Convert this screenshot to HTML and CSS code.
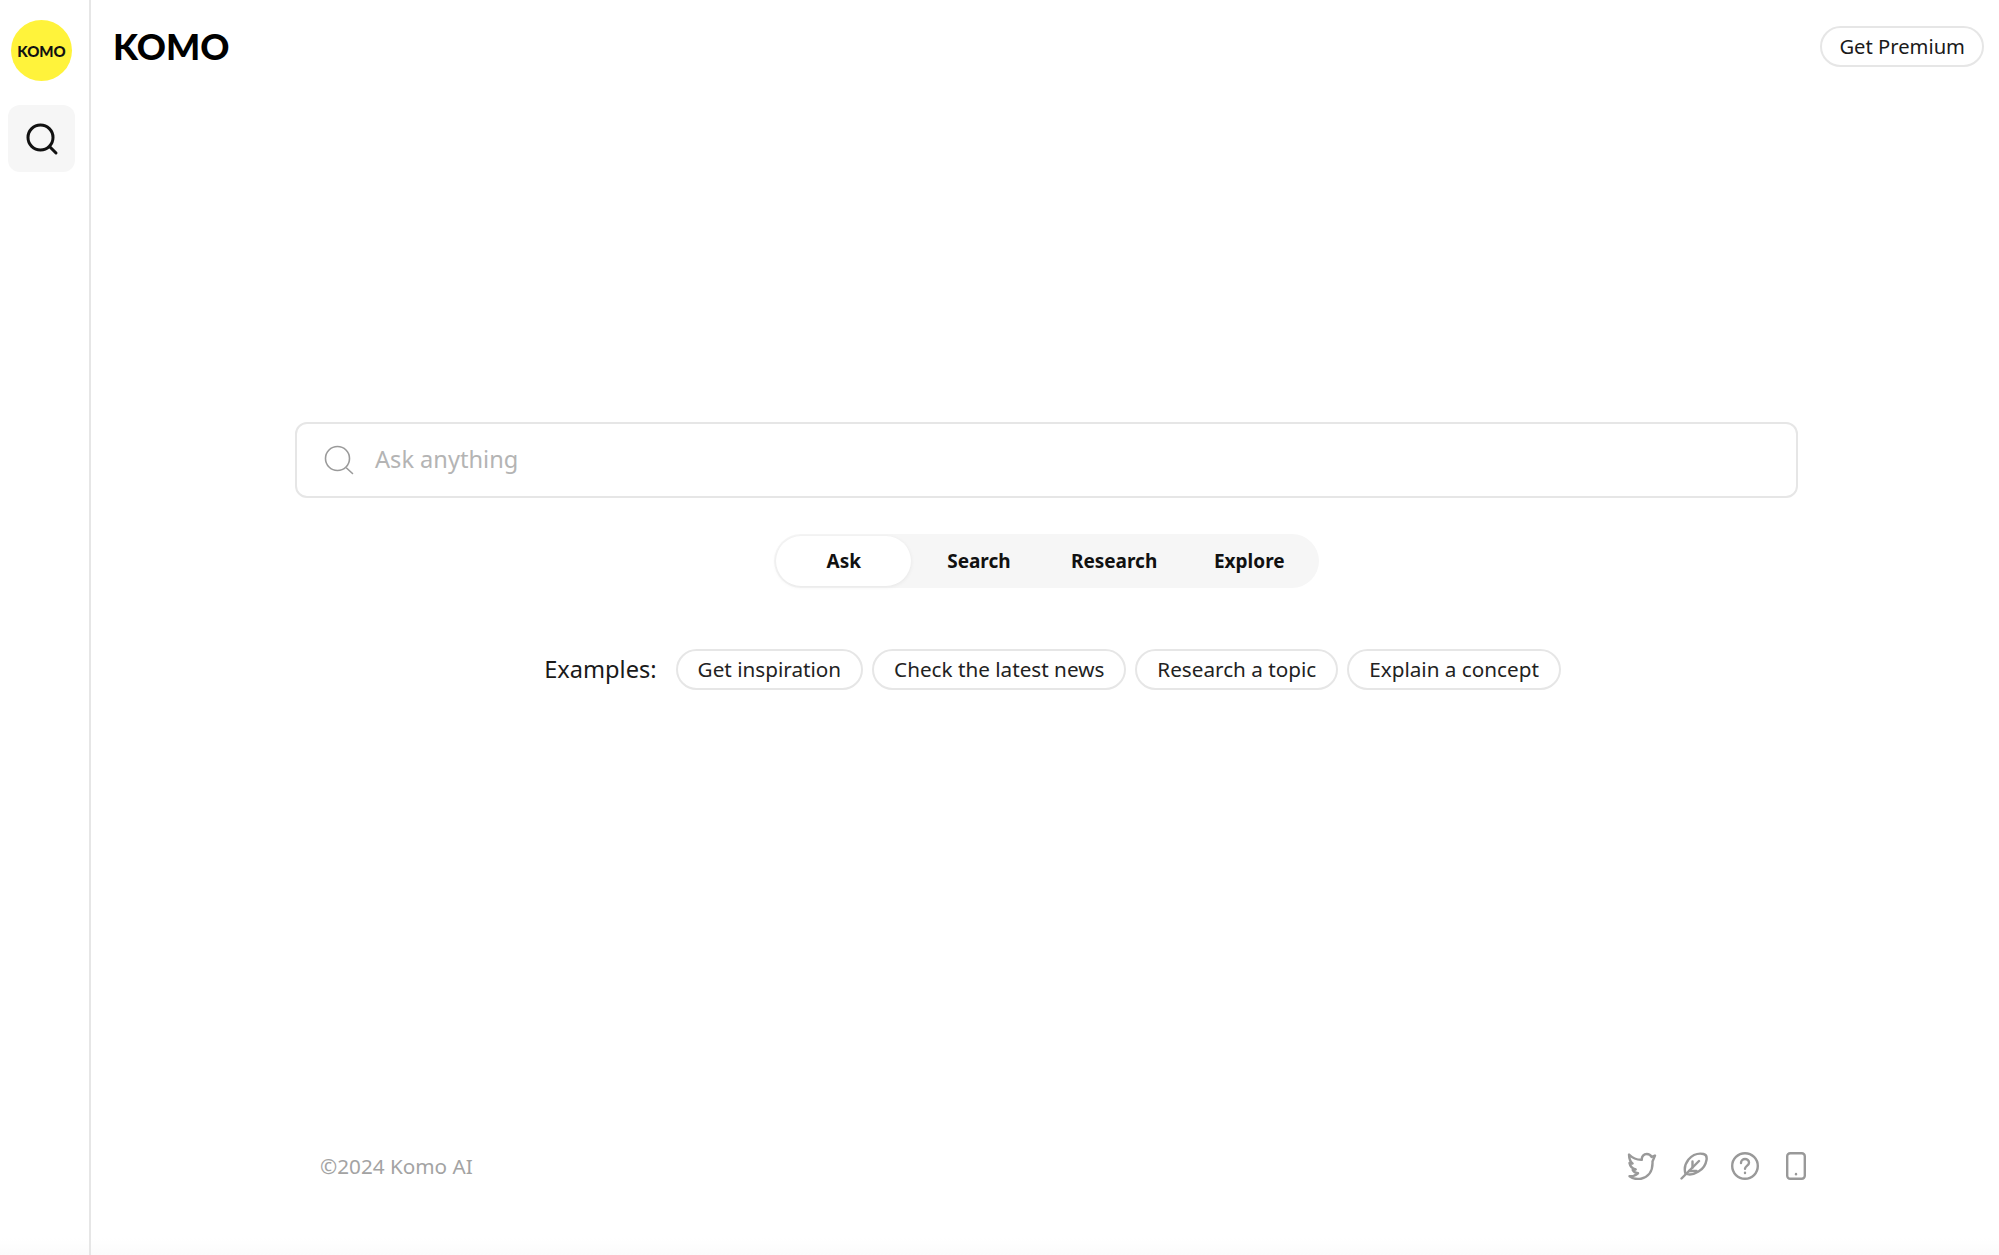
FILE: index.html
```html
<!DOCTYPE html>
<html lang="en">
<head>
    <meta charset="UTF-8">
    <meta name="viewport" content="width=device-width, initial-scale=1.0">
    <title>Komo</title>
    <link rel="stylesheet" href="styles.css">
</head>
<body>
    <div class="app">
        <aside class="sidebar">
            <div class="logo">KOMO</div>
            <button class="side-btn" aria-label="Search">
                <svg width="34" height="34" viewBox="0 0 34 34" fill="none" stroke="#111" stroke-width="3" stroke-linecap="round">
                    <circle cx="15.5" cy="15.5" r="12.5"/>
                    <path d="M25 25l6 6"/>
                </svg>
            </button>
        </aside>

        <div class="main">
            <header class="topbar">
                <div class="brand">KOMO</div>
                <button class="premium">Get Premium</button>
            </header>

            <main class="content">
                <section class="search-box">
                    <svg class="search-icon" width="30" height="30" viewBox="0 0 30 30" fill="none" stroke="#9a9a9a" stroke-width="1.6" stroke-linecap="round">
                        <circle cx="13.5" cy="13.5" r="12"/>
                        <path d="M22.5 23l6 5.5"/>
                    </svg>
                    <span class="placeholder">Ask anything</span>
                </section>

                <nav class="tabs">
                    <span class="tab active">Ask</span>
                    <span class="tab">Search</span>
                    <span class="tab">Research</span>
                    <span class="tab">Explore</span>
                </nav>

                <section class="examples">
                    <span class="examples-label">Examples:</span>
                    <span class="chip">Get inspiration</span>
                    <span class="chip">Check the latest news</span>
                    <span class="chip">Research a topic</span>
                    <span class="chip">Explain a concept</span>
                </section>
            </main>

            <footer class="footer">
                <span class="copyright">©2024 Komo AI</span>
                <div class="footer-icons">
                    <svg width="30" height="28" viewBox="0 0 30 28" fill="none" stroke="#999" stroke-width="2.4" stroke-linejoin="round" stroke-linecap="round">
                        <path d="M28 3.500l-3.400 1.400C23.600 3 21.700 2 19.800 2c-3 0-5.300 2.500-5 5.800C10 8 5.500 6 2 2.500c0 0 .2 6.500 3.500 9L2.500 11c.6 3.400 2.900 5.600 6.200 6.500l-3 .5c1 2 2.800 3 5.300 3.300-2.300 2-5.100 3-8.500 3 3.500 2.500 7.500 3.200 11.500 2.400C21 25.300 26 19.500 25.500 9.500z"/>
                    </svg>
                    <svg width="28" height="28" viewBox="0 0 28 28" fill="none" stroke="#999" stroke-width="2.4" stroke-linejoin="round" stroke-linecap="round">
                        <path d="M1.500 26.500L19 9"/>
                        <path d="M5.500 21.500C4 17 5 12 8.500 7.500c4-4.500 10-6.500 15-5.500 2.500.5 3.500 3 3 6-.8 5-3.500 9-8 11.500-4 2.500-9 4-13 2z"/>
                        <path d="M9 19h7.500M12.500 15.500V9.500"/>
                    </svg>
                    <svg width="28" height="28" viewBox="0 0 28 28" fill="none" stroke="#999" stroke-width="2.4" stroke-linecap="round">
                        <circle cx="14" cy="14" r="12.800"/>
                        <path d="M10 11c0-2.500 2-4 4-4s4 1.500 4 3.700c0 3-4 3.300-4 6"/>
                        <path d="M14 20.800v.2"/>
                    </svg>
                    <svg class="phone-icon" width="20" height="28" viewBox="0 0 20 28" fill="none" stroke="#999" stroke-width="2.4" stroke-linecap="round">
                        <rect x="1.200" y="1.200" width="17.600" height="25.600" rx="3"/>
                        <path d="M10 22v.2"/>
                    </svg>
                </div>
            </footer>
        </div>
    </div>
</body>
</html>
```

FILE: styles.css
```css
html, body {
    height: 100%;
}

body {
    margin: 0;
    font-family: "Noto Sans", "Open Sans", sans-serif;
    color: #1a1a1a;
    background: linear-gradient(to bottom, #fff 1238px, #fbfbfb 100%);
}

button {
    font-family: inherit;
    cursor: pointer;
}

.app {
    display: flex;
    height: 100vh;
    overflow: hidden;
}

.sidebar {
    box-sizing: border-box;
    width: 91px;
    flex-shrink: 0;
    border-right: 2px solid #e6e6e6;
    padding: 20px 6px 0 0;
    display: flex;
    flex-direction: column;
    align-items: center;
    gap: 24px;
}

.logo {
    width: 61px;
    height: 61px;
    border-radius: 50%;
    background: #fff33b;
    color: #111;
    font-family: "Lato", sans-serif;
    font-weight: 900;
    font-size: 15px;
    display: flex;
    align-items: center;
    justify-content: center;
}

.side-btn {
    width: 67px;
    height: 67px;
    border: none;
    border-radius: 12px;
    background: #f6f6f6;
    padding: 0;
    display: flex;
    align-items: center;
    justify-content: center;
}

.main {
    flex: 1;
    display: flex;
    flex-direction: column;
    min-width: 0;
}

.topbar {
    display: flex;
    justify-content: space-between;
    align-items: center;
    padding: 26px 15px 0 22px;
}

.brand {
    font-family: "Lato", sans-serif;
    font-weight: 900;
    font-size: 36px;
    line-height: 40px;
    color: #000;
    margin-top: -2px;
}

.premium {
    height: 41px;
    padding: 0 17px 2px;
    border: 2px solid #e6e6e6;
    border-radius: 21px;
    background: #fff;
    color: #1a1a1a;
    font-size: 20.2px;
}

.content {
    flex: 1;
    display: flex;
    flex-direction: column;
    align-items: center;
    padding: 355px 0 0 204px;
    margin-right: 201px;
}

.search-box {
    box-sizing: border-box;
    width: 100%;
    height: 76px;
    border: 2px solid #e6e6e6;
    border-radius: 12px;
    display: flex;
    align-items: center;
    padding-left: 27px;
    gap: 21px;
    flex-shrink: 0;
}

.placeholder {
    font-size: 23.6px;
    color: #b4b4b4;
    margin-bottom: 2px;
}

.tabs {
    margin-top: 36px;
    display: flex;
    padding: 2px;
    border-radius: 27px;
    background: #f6f6f6;
}

.tab {
    width: 135.2px;
    height: 50px;
    padding-bottom: 1px;
    box-sizing: border-box;
    display: flex;
    align-items: center;
    justify-content: center;
    font-size: 19px;
    font-weight: 700;
    color: #111;
    border-radius: 25px;
}

.tab.active {
    background: #fff;
    box-shadow: 0 1px 4px rgba(0, 0, 0, 0.07);
}

.examples {
    margin: 61px 0 0 12px;
    display: flex;
    align-items: center;
    gap: 9px;
}

.examples-label {
    font-size: 23.6px;
    margin-right: 10px;
    padding-bottom: 1px;
}

.chip {
    box-sizing: border-box;
    height: 41px;
    padding: 0 20px 2px;
    border: 2px solid #e6e6e6;
    border-radius: 21px;
    display: flex;
    align-items: center;
    font-size: 20.7px;
    color: #222;
}

.footer {
    display: flex;
    justify-content: space-between;
    align-items: center;
    margin: 0 193px 75px 229px;
}

.copyright {
    font-size: 20.7px;
    color: #a3a3a3;
}

.footer-icons {
    display: flex;
    align-items: center;
    gap: 23px;
}

.phone-icon {
    margin-left: 4px;
}
```
